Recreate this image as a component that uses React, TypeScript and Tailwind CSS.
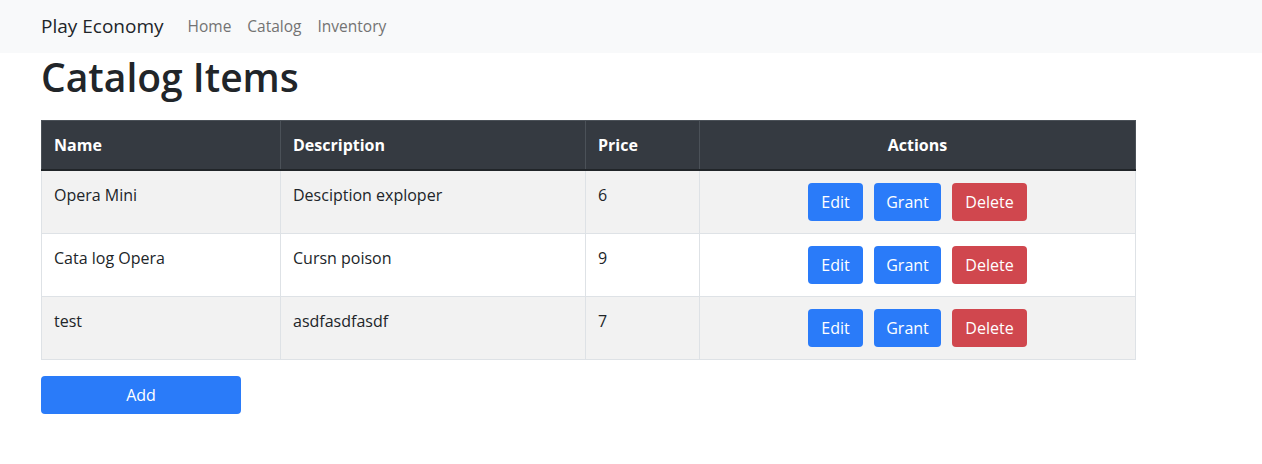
const items = [
  { id: 1, name: 'Opera Mini', description: 'Desciption exploper', price: 6 },
  { id: 2, name: 'Cata log Opera', description: 'Cursn poison', price: 9 },
  { id: 3, name: 'test', description: 'asdfasdfasdf', price: 7 },
];

function NavBar() {
  return (
    <nav className="flex h-[53px] items-center bg-[#f8f9fa] px-[41px]">
      <a className="mr-4 pb-px text-[19px] leading-[30px] text-[#212529]" href="#">
        Play Economy
      </a>
      <div className="flex">
        {['Home', 'Catalog', 'Inventory'].map((link) => (
          <a key={link} className="px-2 pb-px text-[15.5px] leading-6 text-[#737373]" href="#">
            {link}
          </a>
        ))}
      </div>
    </nav>
  );
}

export default function App() {
  return (
    <div className="min-h-screen bg-white font-['Open_Sans',sans-serif] text-[#212529]">
      <NavBar />
      <main className="px-[41px]">
        <h1 className="mb-[19px] text-[39px] font-semibold leading-[48px]">Catalog Items</h1>
        <table className="w-[1095px] border-collapse text-base leading-6">
          <thead className="bg-[#353a41] text-white">
            <tr className="border-b-2 border-[#212529]">
              <th className="w-[239px] border border-[#4b5158] p-3 text-left font-bold">Name</th>
              <th className="w-[305px] border border-[#4b5158] p-3 text-left font-bold">Description</th>
              <th className="w-[114px] border border-[#4b5158] p-3 text-left font-bold">Price</th>
              <th className="border border-[#4b5158] p-3 text-center font-bold">Actions</th>
            </tr>
          </thead>
          <tbody>
            {items.map((item, i) => (
              <tr key={item.id} className={i % 2 === 0 ? 'bg-[#f2f2f2]' : 'bg-white'}>
                <td className="border border-[#dee2e6] p-3 align-top">{item.name}</td>
                <td className="border border-[#dee2e6] p-3 align-top">{item.description}</td>
                <td className="border border-[#dee2e6] p-3 align-top">{item.price}</td>
                <td className="border border-[#dee2e6] p-3">
                  <div className="flex justify-center gap-[11px]">
                    <button className="h-[38px] w-[55px] rounded bg-[#2a7bf9] text-white">Edit</button>
                    <button className="h-[38px] w-[67px] rounded bg-[#2a7bf9] text-white">Grant</button>
                    <button className="h-[38px] w-[75px] rounded bg-[#d0474e] text-white">Delete</button>
                  </div>
                </td>
              </tr>
            ))}
          </tbody>
        </table>
        <button className="mt-4 h-[38px] w-[200px] rounded bg-[#2a7bf9] text-white">Add</button>
      </main>
    </div>
  );
}
